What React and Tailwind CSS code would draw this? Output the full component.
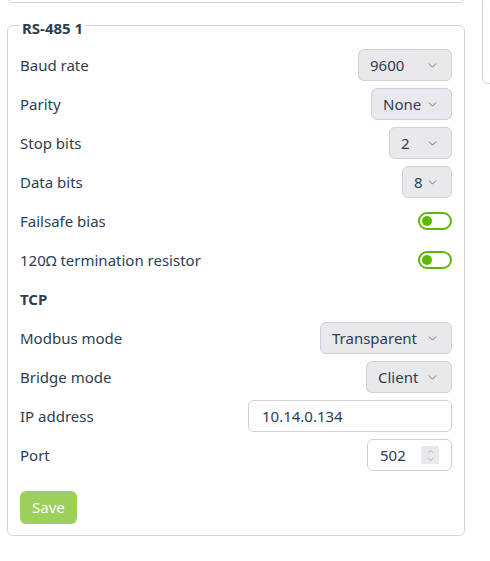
import { ChevronDown, ChevronUp } from 'lucide-react';

const font = { fontFamily: '"Noto Sans", "Open Sans", sans-serif' };

function Select({ value, w }) {
  return (
    <div className={`h-8 ${w} flex items-center justify-between pl-[11px] pr-[12px] bg-[#e9e9ed] border border-[#cfd0d6] rounded-md text-[15px] text-[#2c3e50]`}>
      <span>{value}</span>
      <ChevronDown size={13} strokeWidth={1.5} className="text-[#555]" />
    </div>
  );
}

function Toggle() {
  return (
    <div className="w-[34px] h-[18px] rounded-full border-2 border-[#5cb800] flex items-center pl-[2px]">
      <div className="w-[10px] h-[10px] rounded-full bg-[#5cb800]" />
    </div>
  );
}

function Row({ label, children, bold }) {
  return (
    <div className="h-8 flex items-center justify-between">
      <span className={`text-[15px] text-[#2c3e50] ${bold ? 'font-bold' : ''}`}>{label}</span>
      {children}
    </div>
  );
}

export default function App() {
  return (
    <div className="w-[490px] h-[561px] bg-white overflow-hidden flex" style={font}>
      <div className="ml-[7px] w-[458px] shrink-0 flex flex-col">
        {/* card above, only its bottom edge is visible */}
        <div className="h-[10px] -mt-[7px] border border-[#d0d4db] rounded-md" />

        <fieldset className="mt-[9px] border border-[#d0d4db] rounded-md px-3 pb-[11px]">
          <legend className="px-[2px] pt-[6px] text-[15px] leading-5 font-bold text-[#2c3e50]">RS-485 1</legend>
          <div className="flex flex-col gap-[7px] pt-[11px]">
            <Row label="Baud rate"><Select value="9600" w="w-[94px]" /></Row>
            <Row label="Parity"><Select value="None" w="w-[81px]" /></Row>
            <Row label="Stop bits"><Select value="2" w="w-[63px]" /></Row>
            <Row label="Data bits"><Select value="8" w="w-[50px]" /></Row>
            <Row label="Failsafe bias"><Toggle /></Row>
            <Row label="120Ω termination resistor"><Toggle /></Row>
            <Row label="TCP" bold />
            <Row label="Modbus mode"><Select value="Transparent" w="w-[132px]" /></Row>
            <Row label="Bridge mode"><Select value="Client" w="w-[86px]" /></Row>
            <Row label="IP address">
              <div className="h-8 w-[204px] flex items-center pl-[13px] border border-[#cfd0d6] rounded-md text-[15px] text-[#2c3e50]">10.14.0.134</div>
            </Row>
            <Row label="Port">
              <div className="h-8 w-[85px] flex items-center justify-between pl-[12px] pr-[12px] border border-[#cfd0d6] rounded-md text-[15px] text-[#2c3e50]">
                <span>502</span>
                <div className="w-[18px] h-[18px] bg-[#e9e9ed] flex flex-col items-center justify-center text-[#8a8a8a]">
                  <ChevronUp size={9} strokeWidth={1.5} className="-mb-[1px]" />
                  <ChevronDown size={9} strokeWidth={1.5} />
                </div>
              </div>
            </Row>
          </div>
          <button className="mt-[20px] h-[33px] px-[12px] rounded-md bg-[#9bd15a] text-white text-[15px]">Save</button>
        </fieldset>
      </div>

      {/* neighbouring card on the right */}
      <div className="ml-[17px] w-[40px] h-[88px] -mt-[4px] border border-[#d0d4db] rounded-md shrink-0" />
    </div>
  );
}
